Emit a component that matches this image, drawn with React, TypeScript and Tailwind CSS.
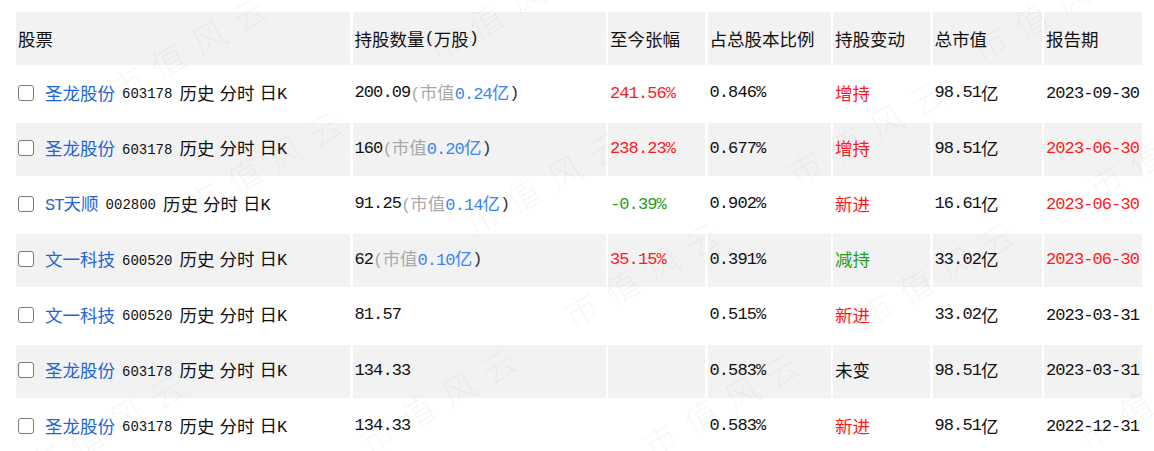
import React from "react";

const CJK = /[\u3000-\u9fff\uff00-\uffef]/;

function Txt({ s, small }: { s: string; small?: boolean }) {
  const parts: { t: string; cjk: boolean }[] = [];
  for (const ch of s) {
    const cjk = CJK.test(ch);
    const last = parts[parts.length - 1];
    if (last && last.cjk === cjk) last.t += ch;
    else parts.push({ t: ch, cjk });
  }
  return (
    <>
      {parts.map((p, i) =>
        p.cjk ? (
          <span key={i} className="text-[17.5px] font-['Noto_Sans_CJK_SC',sans-serif]">
            {p.t}
          </span>
        ) : (
          <span
            key={i}
            className={
              small
                ? "text-[14px] font-['Liberation_Mono',monospace]"
                : "text-[17px] tracking-[-0.9px] font-['Liberation_Mono',monospace]"
            }
          >
            {p.t}
          </span>
        )
      )}
    </>
  );
}

type Row = {
  name: string;
  code: string;
  qty: string;
  mv?: string;
  chg?: string;
  chgColor?: string;
  ratio: string;
  act: string;
  actColor: string;
  total: string;
  date: string;
  dateRed?: boolean;
};

const rows: Row[] = [
  { name: "圣龙股份", code: "603178", qty: "200.09", mv: "0.24亿", chg: "241.56%", chgColor: "text-[#ff1a1a]", ratio: "0.846%", act: "增持", actColor: "text-[#ff1a1a]", total: "98.51亿", date: "2023-09-30" },
  { name: "圣龙股份", code: "603178", qty: "160", mv: "0.20亿", chg: "238.23%", chgColor: "text-[#ff1a1a]", ratio: "0.677%", act: "增持", actColor: "text-[#ff1a1a]", total: "98.51亿", date: "2023-06-30", dateRed: true },
  { name: "ST天顺", code: "002800", qty: "91.25", mv: "0.14亿", chg: "-0.39%", chgColor: "text-[#1f9e1f]", ratio: "0.902%", act: "新进", actColor: "text-[#ff1a1a]", total: "16.61亿", date: "2023-06-30", dateRed: true },
  { name: "文一科技", code: "600520", qty: "62", mv: "0.10亿", chg: "35.15%", chgColor: "text-[#ff1a1a]", ratio: "0.391%", act: "减持", actColor: "text-[#1f9e1f]", total: "33.02亿", date: "2023-06-30", dateRed: true },
  { name: "文一科技", code: "600520", qty: "81.57", ratio: "0.515%", act: "新进", actColor: "text-[#ff1a1a]", total: "33.02亿", date: "2023-03-31" },
  { name: "圣龙股份", code: "603178", qty: "134.33", ratio: "0.583%", act: "未变", actColor: "text-[#111]", total: "98.51亿", date: "2023-03-31" },
  { name: "圣龙股份", code: "603178", qty: "134.33", ratio: "0.583%", act: "新进", actColor: "text-[#ff1a1a]", total: "98.51亿", date: "2022-12-31" },
];

const headers = ["股票", "持股数量(万股)", "至今张幅", "占总股本比例", "持股变动", "总市值", "报告期"];

const marks: [number, number][] = [
  [112, 92],
  [430, 52],
  [188, 207],
  [468, 227],
  [790, 176],
  [975, 52],
  [566, 318],
  [860, 318],
  [645, 448],
  [362, 444],
  [30, 470],
  [1080, 440],
  [1090, 190],
];

function Cell({ children, bg, className = "" }: { children?: React.ReactNode; bg: string; className?: string }) {
  return <div className={`${bg} flex items-center pl-[2px] whitespace-nowrap leading-none ${className}`}>{children}</div>;
}

export default function App() {
  return (
    <div className="relative w-[1154px] h-[451px] bg-white overflow-hidden text-[#111]">
      <div className="pt-[12px] pl-[16px]">
        <div className="grid grid-cols-[334px_253px_97px_123px_97px_109px_98px] auto-rows-[53px] gap-x-[2.5px] gap-y-[2.5px]">
          {headers.map((h, i) => (
            <Cell key={h} bg="bg-[#f2f2f2]" className={i === 0 ? "pl-[1px]" : ""}>
              <Txt s={h} />
            </Cell>
          ))}
          {rows.map((r, idx) => {
            const bg = idx % 2 === 1 ? "bg-[#f2f2f2]" : "bg-white";
            return (
              <React.Fragment key={idx}>
                <Cell bg={bg} className="pl-[1px] pb-[3px]">
                  <span className="w-[16px] h-[16px] rounded-[3px] border-[1.5px] border-[#7a7a7a] bg-white mr-[11px] shrink-0" />
                  <span className="text-[#1f66d6]">
                    <Txt s={r.name} />
                  </span>
                  <span className="ml-[7px]">
                    <Txt s={r.code} small />
                  </span>
                  <span className="ml-[7px]">
                    <Txt s="历史" />
                  </span>
                  <span className="ml-[5px]">
                    <Txt s="分时" />
                  </span>
                  <span className="ml-[5px]">
                    <Txt s="日K" />
                  </span>
                </Cell>
                <Cell bg={bg} className="pb-[3px]">
                  <Txt s={r.qty} />
                  {r.mv && (
                    <>
                      <span className="text-[#aaaaaa]">
                        <Txt s="(市值" />
                      </span>
                      <span className="text-[#3a86f5]">
                        <Txt s={r.mv} />
                      </span>
                      <span className="text-[#333]">
                        <Txt s=")" />
                      </span>
                    </>
                  )}
                </Cell>
                <Cell bg={bg} className="pb-[3px]">
                  {r.chg && (
                    <span className={r.chgColor}>
                      <Txt s={r.chg} />
                    </span>
                  )}
                </Cell>
                <Cell bg={bg} className="pb-[3px]">
                  <Txt s={r.ratio} />
                </Cell>
                <Cell bg={bg} className="pb-[3px]">
                  <span className={r.actColor}>
                    <Txt s={r.act} />
                  </span>
                </Cell>
                <Cell bg={bg} className="pb-[3px]">
                  <Txt s={r.total} />
                </Cell>
                <Cell bg={bg} className="pb-[3px]">
                  <span className={r.dateRed ? "text-[#ff1a1a]" : ""}>
                    <Txt s={r.date} />
                  </span>
                </Cell>
              </React.Fragment>
            );
          })}
        </div>
      </div>
      <div className="pointer-events-none absolute inset-0">
        {marks.map(([x, y], i) => (
          <span
            key={i}
            className="absolute origin-left -rotate-30 whitespace-nowrap text-[34px] tracking-[13px] leading-none text-black/[0.05] font-['Noto_Sans_CJK_SC',sans-serif] font-light -translate-y-1/2"
            style={{ left: x, top: y }}
          >
            市值风云
          </span>
        ))}
      </div>
    </div>
  );
}
